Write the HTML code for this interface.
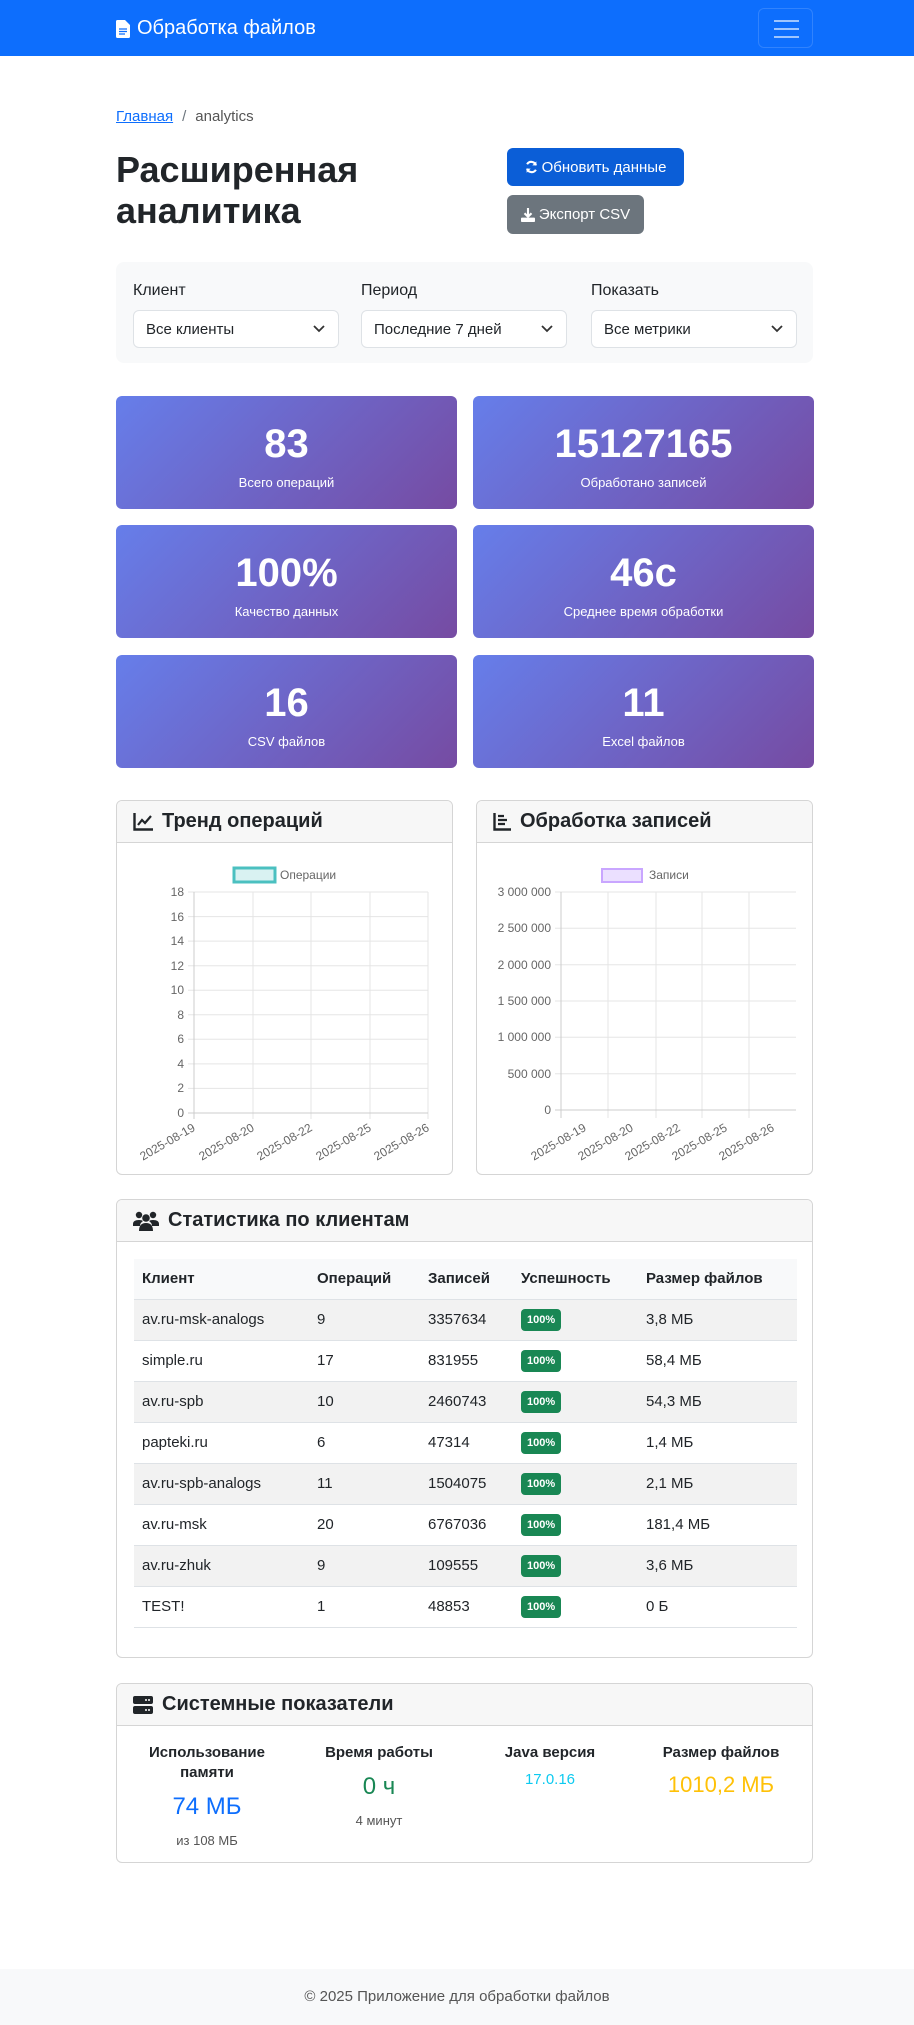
<!DOCTYPE html>
<html><head><meta charset="utf-8"><style>
*{box-sizing:border-box;margin:0;padding:0}
body{width:914px;height:2025px;position:relative;font-family:"Liberation Sans","Noto Sans CJK SC",sans-serif;color:#212529;background:#fff;font-size:16px;overflow:hidden}
.a{position:absolute}
.nav{left:0;top:0;width:914px;height:56px;background:#0d6efd}
.brand{left:116px;top:17px;color:#fff;font-size:20px;display:flex;align-items:center;gap:7px}
.tog{left:758px;top:8px;width:55px;height:40px;border:1px solid rgba(255,255,255,.15);border-radius:6px}
.tog i{position:absolute;left:15px;width:25px;height:2px;background:rgba(255,255,255,.6)}
.btn{border-radius:6px;color:#fff;font-size:15px;display:flex;align-items:center;justify-content:center;gap:4px}
.filt{left:116px;top:262px;width:697px;height:101px;background:#f8f9fa;border-radius:8px}
.lbl{font-size:16px;top:282px}
.sel{top:310px;width:206px;height:38px;border:1px solid #dee2e6;border-radius:6px;background:#fff;font-size:15px;padding:10px 12px 8px}
.sel svg{position:absolute;right:13px;top:14px}
.stat{width:341px;height:113px;border-radius:6px;background:linear-gradient(135deg,#667eea,#764ba2);color:#fff;text-align:center}
.stat b{display:block;font-size:40px;margin-top:25px;line-height:46px}
.stat span{display:block;font-size:13px;margin-top:8px}
.card{border:1px solid #d5d5d5;border-radius:6px;background:#fff;overflow:hidden}
.ch{height:42px;background:#f7f7f7;border-bottom:1px solid #d5d5d5;font-size:20px;font-weight:bold;padding:8px 16px;display:flex;align-items:center;gap:9px}
table{position:absolute;left:17px;top:59px;width:663px;border-collapse:collapse;font-size:15px}
th{text-align:left;background:#f8f9fa;font-weight:600;height:40px;padding:0 8px;border-bottom:1px solid #dee2e6}
td{height:41px;padding:0 8px;border-bottom:1px solid #dee2e6}
tr.o td{background:#f2f2f2}
.bd{display:inline-block;background:#198754;color:#fff;font-size:11px;font-weight:bold;padding:5px 6px;border-radius:4px}
.sys{width:166px;text-align:center}
.sys h6{font-size:15px;font-weight:bold;line-height:20px}
.foot{left:0;top:1969px;width:914px;height:56px;background:#f8f9fa;text-align:center;font-size:15px;color:#555;line-height:56px}
</style></head><body>
<div class="a nav"></div>
<div class="a brand"><svg width="14" height="18" viewBox="0 0 14 18"><path d="M0 1.5A1.5 1.5 0 0 1 1.5 0H9l5 5v11.5a1.5 1.5 0 0 1-1.5 1.5h-11A1.5 1.5 0 0 1 0 16.5z" fill="#fff"/><path d="M3 9h8M3 11.5h8M3 14h6" stroke="#0d6efd" stroke-width="1.2"/></svg>Обработка файлов</div>
<div class="a tog"><i style="top:11px"></i><i style="top:19px"></i><i style="top:27px"></i></div>

<div class="a" style="left:116px;top:108px;font-size:15px"><span style="color:#0d6efd;text-decoration:underline">Главная</span><span style="color:#6c757d;margin:0 9px">/</span><span style="color:#555">analytics</span></div>
<div class="a" style="left:116px;top:149px;font-size:36px;line-height:41px;font-weight:bold">Расширенная<br>аналитика</div>
<div class="a btn" style="left:507px;top:148px;width:177px;height:38px;background:#0b5ed7"><svg width="13" height="14" viewBox="0 0 16 16"><path d="M13.5 6A6 6 0 0 0 2.6 4.6M2.5 10a6 6 0 0 0 10.9 1.4" stroke="#fff" stroke-width="2.6" fill="none"/><path d="M14 1v5H9zM2 15v-5h5z" fill="#fff"/></svg>Обновить данные</div>
<div class="a btn" style="left:507px;top:195px;width:137px;height:39px;background:#6c757d"><svg width="14" height="14" viewBox="0 0 16 16"><path d="M8 0v9M4 6l4 4 4-4" stroke="#fff" stroke-width="2.4" fill="none"/><rect x="0" y="11" width="16" height="5" rx="1" fill="#fff"/></svg>Экспорт CSV</div>

<div class="a filt"></div>
<div class="a lbl" style="left:133px">Клиент</div>
<div class="a lbl" style="left:361px">Период</div>
<div class="a lbl" style="left:591px">Показать</div>
<div class="a sel" style="left:133px">Все клиенты<svg width="12" height="8" viewBox="0 0 12 8"><path d="M1 1l5 5 5-5" stroke="#333" stroke-width="1.8" fill="none"/></svg></div>
<div class="a sel" style="left:361px">Последние 7 дней<svg width="12" height="8" viewBox="0 0 12 8"><path d="M1 1l5 5 5-5" stroke="#333" stroke-width="1.8" fill="none"/></svg></div>
<div class="a sel" style="left:591px">Все метрики<svg width="12" height="8" viewBox="0 0 12 8"><path d="M1 1l5 5 5-5" stroke="#333" stroke-width="1.8" fill="none"/></svg></div>

<div class="a stat" style="left:116px;top:396px"><b>83</b><span>Всего операций</span></div>
<div class="a stat" style="left:473px;top:396px"><b>15127165</b><span>Обработано записей</span></div>
<div class="a stat" style="left:116px;top:525px"><b>100%</b><span>Качество данных</span></div>
<div class="a stat" style="left:473px;top:525px"><b>46с</b><span>Среднее время обработки</span></div>
<div class="a stat" style="left:116px;top:655px"><b>16</b><span>CSV файлов</span></div>
<div class="a stat" style="left:473px;top:655px"><b>11</b><span>Excel файлов</span></div>

<div class="a card" style="left:116px;top:800px;width:337px;height:375px"><div class="ch"><svg width="20" height="18" viewBox="0 0 20 18"><path d="M1.5 0v16.5H20" stroke="#212529" stroke-width="2.4" fill="none"/><path d="M5 12l4-5 3 3 6-7" stroke="#212529" stroke-width="2.2" fill="none"/></svg>Тренд операций</div></div>
<div class="a card" style="left:476px;top:800px;width:337px;height:375px"><div class="ch"><svg width="18" height="18" viewBox="0 0 18 18"><path d="M1.5 0v16.5H18" stroke="#212529" stroke-width="2.4" fill="none"/><path d="M5 3h6M5 7h9M5 11h7" stroke="#212529" stroke-width="2.2"/></svg>Обработка записей</div></div>

<svg class="a" style="left:0;top:0" width="914" height="1200" font-family="Liberation Sans, sans-serif" font-size="12" fill="#666">
<rect x="234" y="868" width="41" height="14" fill="#d9f2f2" stroke="#4bc0c0" stroke-width="3"/>
<text x="280" y="879">Операции</text>
<g stroke="#e5e5e5" stroke-width="1">
<line x1="188" y1="892" x2="428" y2="892"/><line x1="188" y1="916.6" x2="428" y2="916.6"/><line x1="188" y1="941.1" x2="428" y2="941.1"/><line x1="188" y1="965.7" x2="428" y2="965.7"/><line x1="188" y1="990.2" x2="428" y2="990.2"/><line x1="188" y1="1014.8" x2="428" y2="1014.8"/><line x1="188" y1="1039.3" x2="428" y2="1039.3"/><line x1="188" y1="1063.9" x2="428" y2="1063.9"/><line x1="188" y1="1088.4" x2="428" y2="1088.4"/>
<line x1="253" y1="892" x2="253" y2="1119"/><line x1="311" y1="892" x2="311" y2="1119"/><line x1="370" y1="892" x2="370" y2="1119"/><line x1="428" y1="892" x2="428" y2="1119"/>
</g>
<g stroke="#ccc"><line x1="194" y1="892" x2="194" y2="1119"/><line x1="188" y1="1113" x2="428" y2="1113"/></g>
<g text-anchor="end"><text x="184" y="896">18</text><text x="184" y="921">16</text><text x="184" y="945">14</text><text x="184" y="970">12</text><text x="184" y="994">10</text><text x="184" y="1019">8</text><text x="184" y="1043">6</text><text x="184" y="1068">4</text><text x="184" y="1092">2</text><text x="184" y="1117">0</text>
<text transform="translate(196,1130) rotate(-30)">2025-08-19</text><text transform="translate(255,1130) rotate(-30)">2025-08-20</text><text transform="translate(313,1130) rotate(-30)">2025-08-22</text><text transform="translate(372,1130) rotate(-30)">2025-08-25</text><text transform="translate(430,1130) rotate(-30)">2025-08-26</text></g>

<rect x="602" y="869" width="40" height="13" fill="#ebe0ff" stroke="#c9a6ff" stroke-width="2"/>
<text x="649" y="879">Записи</text>
<g stroke="#e5e5e5">
<line x1="555" y1="892" x2="796" y2="892"/><line x1="555" y1="928.3" x2="796" y2="928.3"/><line x1="555" y1="964.7" x2="796" y2="964.7"/><line x1="555" y1="1001" x2="796" y2="1001"/><line x1="555" y1="1037.3" x2="796" y2="1037.3"/><line x1="555" y1="1073.7" x2="796" y2="1073.7"/>
<line x1="608" y1="892" x2="608" y2="1118"/><line x1="656" y1="892" x2="656" y2="1118"/><line x1="702" y1="892" x2="702" y2="1118"/><line x1="749" y1="892" x2="749" y2="1118"/>
</g>
<g stroke="#ccc"><line x1="561" y1="892" x2="561" y2="1118"/><line x1="555" y1="1110" x2="796" y2="1110"/></g>
<g text-anchor="end"><text x="551" y="896">3 000 000</text><text x="551" y="932">2 500 000</text><text x="551" y="969">2 000 000</text><text x="551" y="1005">1 500 000</text><text x="551" y="1041">1 000 000</text><text x="551" y="1078">500 000</text><text x="551" y="1114">0</text>
<text transform="translate(587,1130) rotate(-30)">2025-08-19</text><text transform="translate(634,1130) rotate(-30)">2025-08-20</text><text transform="translate(681,1130) rotate(-30)">2025-08-22</text><text transform="translate(728,1130) rotate(-30)">2025-08-25</text><text transform="translate(775,1130) rotate(-30)">2025-08-26</text></g>
</svg>

<div class="a card" style="left:116px;top:1199px;width:697px;height:459px"><div class="ch"><svg width="26" height="20" viewBox="0 0 26 20"><circle cx="6" cy="4" r="3.2" fill="#212529"/><circle cx="20" cy="4" r="3.2" fill="#212529"/><circle cx="13" cy="7" r="3.8" fill="#212529"/><path d="M0 13q0-4 6-4 3 0 4 1-3 2-3 5H0zM26 13q0-4-6-4-3 0-4 1 3 2 3 5h7zM6 20q0-8 7-8t7 8z" fill="#212529"/></svg>Статистика по клиентам</div>
<table>
<tr><th style="width:175px">Клиент</th><th style="width:111px">Операций</th><th style="width:93px">Записей</th><th style="width:125px">Успешность</th><th>Размер файлов</th></tr>
<tr class="o"><td>av.ru-msk-analogs</td><td>9</td><td>3357634</td><td><span class="bd">100%</span></td><td>3,8 МБ</td></tr>
<tr><td>simple.ru</td><td>17</td><td>831955</td><td><span class="bd">100%</span></td><td>58,4 МБ</td></tr>
<tr class="o"><td>av.ru-spb</td><td>10</td><td>2460743</td><td><span class="bd">100%</span></td><td>54,3 МБ</td></tr>
<tr><td>papteki.ru</td><td>6</td><td>47314</td><td><span class="bd">100%</span></td><td>1,4 МБ</td></tr>
<tr class="o"><td>av.ru-spb-analogs</td><td>11</td><td>1504075</td><td><span class="bd">100%</span></td><td>2,1 МБ</td></tr>
<tr><td>av.ru-msk</td><td>20</td><td>6767036</td><td><span class="bd">100%</span></td><td>181,4 МБ</td></tr>
<tr class="o"><td>av.ru-zhuk</td><td>9</td><td>109555</td><td><span class="bd">100%</span></td><td>3,6 МБ</td></tr>
<tr><td>TEST!</td><td>1</td><td>48853</td><td><span class="bd">100%</span></td><td>0 Б</td></tr>
</table></div>

<div class="a card" style="left:116px;top:1683px;width:697px;height:180px"><div class="ch"><svg width="20" height="18" viewBox="0 0 20 18"><rect x="0" y="0" width="20" height="8" rx="2" fill="#212529"/><rect x="0" y="10" width="20" height="8" rx="2" fill="#212529"/><circle cx="16" cy="4" r="1" fill="#fff"/><circle cx="13" cy="4" r="1" fill="#fff"/><circle cx="16" cy="14" r="1" fill="#fff"/><circle cx="13" cy="14" r="1" fill="#fff"/></svg>Системные показатели</div></div>
<div class="a sys" style="left:124px;top:1743px"><h6>Использование<br>памяти</h6><div style="color:#0d6efd;font-size:24px;margin-top:10px;font-weight:500">74 МБ</div><div style="color:#555;font-size:13px;margin-top:12px">из 108 МБ</div></div>
<div class="a sys" style="left:296px;top:1743px"><h6>Время работы</h6><div style="color:#198754;font-size:24px;margin-top:10px;font-weight:500">0 ч</div><div style="color:#555;font-size:13px;margin-top:12px">4 минут</div></div>
<div class="a sys" style="left:467px;top:1743px"><h6>Java версия</h6><div style="color:#0dcaf0;font-size:15px;margin-top:8px">17.0.16</div></div>
<div class="a sys" style="left:638px;top:1743px"><h6>Размер файлов</h6><div style="color:#ffc107;font-size:22px;margin-top:9px">1010,2 МБ</div></div>

<div class="a foot">© 2025 Приложение для обработки файлов</div>
</body></html>
